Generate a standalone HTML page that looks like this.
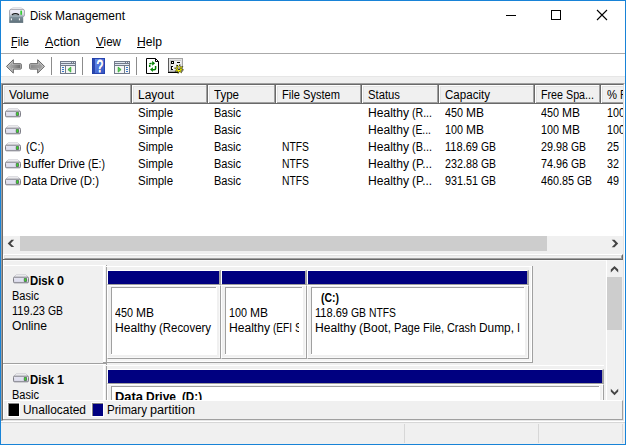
<!DOCTYPE html>
<html><head><meta charset="utf-8"><title>Disk Management</title>
<style>
html,body{margin:0;padding:0;}
body{width:626px;height:445px;position:relative;overflow:hidden;background:#fff;font-family:"Liberation Sans",sans-serif;font-size:12px;color:#000;}
.a{position:absolute;}
.t{position:absolute;white-space:pre;line-height:14px;height:14px;}
.w{position:absolute;top:0;transform-origin:0 0;white-space:pre}
.g{background:#f0f0f0;}
.hs{position:absolute;top:85px;width:1px;height:19px;background:#696969}
.hs::before{content:"";position:absolute;left:-1px;top:0;width:1px;height:18px;background:#a0a0a0}
.hs::after{content:"";position:absolute;left:1px;top:0;width:1px;height:18px;background:#fff}
.hs i{position:absolute;left:2px;top:1px;width:1px;height:16px;background:#e3e3e3}
</style></head><body>
<svg width="0" height="0" style="position:absolute"><defs>
<linearGradient id="dg" x1="0" y1="0" x2="0" y2="1"><stop offset="0" stop-color="#f4f4f8"/><stop offset="1" stop-color="#c6c6d2"/></linearGradient>
<linearGradient id="ag" x1="0" y1="0" x2="1" y2="0"><stop offset="0" stop-color="#b2b2b2"/><stop offset=".55" stop-color="#909090"/><stop offset="1" stop-color="#6c6c6c"/></linearGradient>
<linearGradient id="ag2" x1="0" y1="0" x2="1" y2="0"><stop offset="0" stop-color="#8a8a8a"/><stop offset="1" stop-color="#a4a4a4"/></linearGradient>
<linearGradient id="hg" x1="0" y1="0" x2="1" y2="1"><stop offset="0" stop-color="#6f94f2"/><stop offset="1" stop-color="#3052c0"/></linearGradient>
<linearGradient id="tg" x1="0" y1="0" x2="0" y2="1"><stop offset="0" stop-color="#8698a2"/><stop offset="1" stop-color="#5c6e78"/></linearGradient>
</defs></svg>

<!-- window frame -->
<div class="a" style="left:0;top:0;width:624px;height:443px;border:1px solid #1883d7;"></div>

<!-- title bar -->
<svg class="a" style="left:9px;top:7px" width="16" height="16" viewBox="0 0 16 16">
 <path d="M4 .6H12L15 2.6H1Z" fill="#f4f4f6" stroke="#cfcfd4" stroke-width=".6"/>
 <rect x=".5" y="2.4" width="15" height="7.2" rx="1.6" fill="url(#dg)" stroke="#a2a2ac" stroke-width=".9"/>
 <rect x="2.2" y="3.4" width="8.6" height="3" fill="#eaeaf6"/>
 <rect x="11.4" y="3.6" width="1.5" height="4.2" fill="#22cc22"/>
 <rect x=".2" y="8.7" width="14" height="7.2" fill="url(#tg)"/>
 <rect x=".2" y="8.7" width="14" height=".9" fill="#a9b8c0"/>
 <path d="M2.9 7.8Q6.4 5.2 9.9 7.8V9H2.9Z" fill="#95a3ab"/><path d="M2.9 7.8Q6.4 5.2 9.9 7.8" fill="none" stroke="#1a1a1a" stroke-width="1.15"/>
 <rect x="1.9" y="11.4" width="1" height="1.9" fill="#fff"/><rect x="9.9" y="11.4" width="1" height="1.9" fill="#fff"/>
</svg>
<span class="t" style="left:29.60px;top:9.00px;"><span class="w" style="left:0px;transform:scaleX(0.9424)">Disk</span> <span class="w" style="left:25px;transform:scaleX(0.9993)">Management</span></span>
<svg class="a" style="left:490px;top:1px" width="135" height="30" viewBox="0 0 135 30" shape-rendering="crispEdges">
 <rect x="16" y="14" width="10" height="1" fill="#000"/>
 <rect x="61.5" y="9.5" width="9" height="9" stroke="#000" stroke-width="1" fill="none"/>
 <path d="M107 9l10 10M117 9l-10 10" stroke="#000" stroke-width="1.1" fill="none" shape-rendering="auto"/>
</svg>

<!-- menu -->
<span class="t" style="left:11.00px;top:35.00px;"><span class="w" style="left:0px;transform:scaleX(0.9305)">File</span></span>
<span class="t" style="left:45.00px;top:35.00px;"><span class="w" style="left:0px;transform:scaleX(1.0492)">Action</span></span>
<span class="t" style="left:96.00px;top:35.00px;"><span class="w" style="left:0px;transform:scaleX(0.9691)">View</span></span>
<span class="t" style="left:137.00px;top:35.00px;"><span class="w" style="left:0px;transform:scaleX(1.0127)">Help</span></span>
<div class="a" style="left:11px;top:47px;width:6px;height:1px;background:#000"></div>
<div class="a" style="left:45px;top:47px;width:8px;height:1px;background:#000"></div>
<div class="a" style="left:96px;top:47px;width:8px;height:1px;background:#000"></div>
<div class="a" style="left:137px;top:47px;width:8px;height:1px;background:#000"></div>
<div class="a" style="left:1px;top:53px;width:624px;height:1px;background:#aaa"></div>

<!-- toolbar -->
<svg class="a" style="left:1px;top:54px" width="200" height="23" viewBox="1 54 200 23">
 <path d="M6.5 66.4L13.3 59.7V63.7H20.6Q21.3 63.7 21.3 64.4V68.4Q21.3 69.1 20.6 69.1H13.3V73.1Z" fill="#c2c2c2" stroke="#636363" stroke-width="1" stroke-linejoin="miter"/>
 <path d="M8.3 66.4L12.2 62.5V64.8H20.2V68H12.2V70.3Z" fill="url(#ag)"/>
 <path d="M44.5 66.4L37.7 59.7V63.7H30.4Q29.7 63.7 29.7 64.4V68.4Q29.7 69.1 30.4 69.1H37.7V73.1Z" fill="#c2c2c2" stroke="#636363" stroke-width="1" stroke-linejoin="miter"/>
 <path d="M42.7 66.4L38.8 62.5V64.8H30.8V68H38.8V70.3Z" fill="url(#ag2)"/>
 <g shape-rendering="crispEdges">
 <rect x="51" y="57" width="1" height="18" fill="#8c8c8c"/>
 <rect x="82" y="57" width="1" height="18" fill="#8c8c8c"/>
 <rect x="136" y="57" width="1" height="18" fill="#8c8c8c"/>
 <!-- show/hide tree -->
 <rect x="60.5" y="61.5" width="15" height="12" fill="#f6f6f6" stroke="#727a8a"/>
 <rect x="61" y="62" width="14" height="4" fill="#727a8a"/>
 <rect x="61" y="62" width="10" height="1" fill="#dfe5ef"/><rect x="72" y="62" width="1" height="1" fill="#dfe5ef"/><rect x="74" y="62" width="1" height="1" fill="#dfe5ef"/>
 <rect x="61" y="64" width="14" height="1" fill="#dfe5ef"/>
 <rect x="65" y="66" width="1" height="7" fill="#727a8a"/>
 <rect x="62" y="67" width="2" height="1" fill="#3878cc"/><rect x="62" y="69" width="2" height="1" fill="#3878cc"/><rect x="62" y="71" width="2" height="1" fill="#3878cc"/>
 </g>
 <path d="M70.8 67.1V72.1L67.9 69.6Z" fill="#58cc58" stroke="#22a022" stroke-width=".7"/>
 <!-- help -->
 <rect x="92" y="58" width="13" height="16" fill="url(#hg)"/>
 <rect x="92.5" y="58.5" width="12" height="15" fill="none" stroke="#2743ae" stroke-width="1"/>
 <rect x="92" y="58" width="3" height="16" fill="#2340a6" opacity=".85"/>
 <text transform="translate(100.6 72.2) scale(.72 1)" font-family="Liberation Sans,sans-serif" font-size="15.8" fill="#1b2f86" opacity=".6" stroke="#1b2f86" stroke-width=".6" text-anchor="middle">?</text>
 <text transform="translate(99.9 71.6) scale(.72 1)" font-family="Liberation Sans,sans-serif" font-size="15.8" fill="#fff" stroke="#fff" stroke-width=".9" text-anchor="middle">?</text>
 <g shape-rendering="crispEdges">
 <!-- action pane -->
 <rect x="114.5" y="61.5" width="15" height="12" fill="#f6f6f6" stroke="#727a8a"/>
 <rect x="115" y="62" width="14" height="4" fill="#727a8a"/>
 <rect x="115" y="62" width="10" height="1" fill="#dfe5ef"/><rect x="126" y="62" width="1" height="1" fill="#dfe5ef"/><rect x="128" y="62" width="1" height="1" fill="#dfe5ef"/>
 <rect x="115" y="64" width="14" height="1" fill="#dfe5ef"/>
 <rect x="124" y="66" width="1" height="7" fill="#727a8a"/>
 <rect x="126" y="67" width="2" height="1" fill="#3878cc"/><rect x="126" y="69" width="2" height="1" fill="#3878cc"/><rect x="126" y="71" width="2" height="1" fill="#3878cc"/>
 </g>
 <path d="M118.2 67.1V72.1L121.1 69.6Z" fill="#58cc58" stroke="#22a022" stroke-width=".7"/>
 <!-- refresh -->
 <path d="M146.5 58.5H155.5L158.5 61.5V73.5H146.5Z" fill="#fff" stroke="#000" stroke-width="1"/>
 <path d="M155.5 58.5V61.5H158.5" fill="none" stroke="#000" stroke-width="1"/>
 <path d="M149.7 67V64.6Q149.7 63.4 150.9 63.4H152.6" fill="none" stroke="#008000" stroke-width="1.5" stroke-dasharray="2.2 .5"/>
 <path d="M152.2 60.9L155.1 63.3L152.2 65.7Z" fill="#008000"/>
 <path d="M155.6 66V68.5Q155.6 69.7 154.4 69.7H152.6" fill="none" stroke="#008000" stroke-width="1.5"/>
 <path d="M152.9 67.2L150 69.6L152.9 72Z" fill="#008000"/>
 <!-- properties -->
 <g shape-rendering="crispEdges">
 <rect x="168" y="58" width="15" height="14" fill="#a4a4a4"/>
 <rect x="169" y="59" width="13" height="12" fill="#e4e4e4"/>
 <rect x="170" y="60" width="11" height="11" fill="#c8c8c8"/>
 <rect x="171" y="61" width="10" height="9" fill="#f0f0f0"/>
 <rect x="168" y="58" width="1" height="15" fill="#5a5a5a"/><rect x="168" y="72" width="11" height="1" fill="#000"/>
 <rect x="171" y="61" width="3" height="3" fill="#000"/><rect x="172" y="62" width="1" height="1" fill="#fff"/>
 <rect x="177" y="62" width="3" height="1" fill="#000"/>
 <rect x="171" y="66" width="2" height="4" fill="#000"/><rect x="172" y="67" width="1" height="2" fill="#fff"/>
 <rect x="177" y="65" width="3" height="4" fill="#000"/><rect x="178" y="65" width="1" height="3" fill="#fff"/>
 </g>
 <path d="M179.9 64.4L180.3 67.1L182.9 66.4L181.3 68.6L183.6 69.9L180.9 70.3L181.6 72.9L179.4 71.3L178.1 73.6L177.7 70.9L175.1 71.6L176.7 69.4L174.4 68.1L177.1 67.7L176.4 65.1L178.6 66.7Z" fill="#ffff00" stroke="#1a1a00" stroke-width=".55" stroke-linejoin="round"/>
 <circle cx="179" cy="68.6" r="1.5" fill="#222"/>
 <rect x="178.4" y="66.6" width="1.1" height="2.4" fill="#fff"/>
</svg>
<div class="a g" style="left:1px;top:76px;width:624px;height:7px;box-sizing:border-box;border-top:1px solid #e6e6e6"></div>

<div class="a" style="left:1px;top:77px;width:1px;height:6px;background:#f8f5f3"></div>
<!-- list view -->
<div class="a" style="left:1px;top:83px;width:624px;height:171px;box-sizing:border-box;border-top:1px solid #a0a0a0;border-left:1px solid #a0a0a0;border-right:1px solid #fff;background:#fff"></div>
<div class="a" style="left:2px;top:84px;width:622px;height:170px;box-sizing:border-box;border-top:1px solid #696969;border-left:1px solid #696969;border-right:1px solid #e3e3e3;"></div>
<!-- header -->
<div class="a g" style="left:3px;top:85px;width:620px;height:19px;box-sizing:border-box;border-top:1px solid #fff;border-left:1px solid #fff;border-bottom:1px solid #696969"></div>
<div class="a" style="left:4px;top:102px;width:619px;height:1px;background:#a0a0a0"></div>
<div class="a" style="left:4px;top:86px;width:619px;height:1px;background:#e3e3e3"></div>
<div class="a" style="left:4px;top:86px;width:1px;height:16px;background:#e3e3e3"></div>
<div class="a" style="left:3px;top:103px;width:620px;height:1px;background:#696969"></div>
<div class="hs" style="left:131px"><i></i></div><div class="hs" style="left:207px"><i></i></div><div class="hs" style="left:275px"><i></i></div><div class="hs" style="left:361px"><i></i></div><div class="hs" style="left:438px"><i></i></div><div class="hs" style="left:534px"><i></i></div><div class="hs" style="left:600px"><i></i></div>
<svg class="a" style="left:5px;top:107.5px" width="16" height="10" viewBox="0 0 16 10"><path d="M3.3 .8H12.7L15.4 3.3H.6Z" fill="#f5f5f7" stroke="#bcbcc4" stroke-width=".7"/><rect x=".5" y="3.2" width="15" height="5.6" rx="1.1" fill="url(#dg)" stroke="#70707a" stroke-width=".9"/><rect x="1.8" y="4.2" width="9" height="3.4" fill="#e0e0f0"/><rect x="10.8" y="3.9" width="3.2" height="4" rx=".8" fill="#60606a"/><rect x="11.5" y="4.4" width="1.8" height="3" fill="#3ad828"/></svg>
<svg class="a" style="left:5px;top:124.5px" width="16" height="10" viewBox="0 0 16 10"><path d="M3.3 .8H12.7L15.4 3.3H.6Z" fill="#f5f5f7" stroke="#bcbcc4" stroke-width=".7"/><rect x=".5" y="3.2" width="15" height="5.6" rx="1.1" fill="url(#dg)" stroke="#70707a" stroke-width=".9"/><rect x="1.8" y="4.2" width="9" height="3.4" fill="#e0e0f0"/><rect x="10.8" y="3.9" width="3.2" height="4" rx=".8" fill="#60606a"/><rect x="11.5" y="4.4" width="1.8" height="3" fill="#3ad828"/></svg>
<svg class="a" style="left:5px;top:141.5px" width="16" height="10" viewBox="0 0 16 10"><path d="M3.3 .8H12.7L15.4 3.3H.6Z" fill="#f5f5f7" stroke="#bcbcc4" stroke-width=".7"/><rect x=".5" y="3.2" width="15" height="5.6" rx="1.1" fill="url(#dg)" stroke="#70707a" stroke-width=".9"/><rect x="1.8" y="4.2" width="9" height="3.4" fill="#e0e0f0"/><rect x="10.8" y="3.9" width="3.2" height="4" rx=".8" fill="#60606a"/><rect x="11.5" y="4.4" width="1.8" height="3" fill="#3ad828"/></svg>
<svg class="a" style="left:5px;top:158.5px" width="16" height="10" viewBox="0 0 16 10"><path d="M3.3 .8H12.7L15.4 3.3H.6Z" fill="#f5f5f7" stroke="#bcbcc4" stroke-width=".7"/><rect x=".5" y="3.2" width="15" height="5.6" rx="1.1" fill="url(#dg)" stroke="#70707a" stroke-width=".9"/><rect x="1.8" y="4.2" width="9" height="3.4" fill="#e0e0f0"/><rect x="10.8" y="3.9" width="3.2" height="4" rx=".8" fill="#60606a"/><rect x="11.5" y="4.4" width="1.8" height="3" fill="#3ad828"/></svg>
<svg class="a" style="left:5px;top:175.5px" width="16" height="10" viewBox="0 0 16 10"><path d="M3.3 .8H12.7L15.4 3.3H.6Z" fill="#f5f5f7" stroke="#bcbcc4" stroke-width=".7"/><rect x=".5" y="3.2" width="15" height="5.6" rx="1.1" fill="url(#dg)" stroke="#70707a" stroke-width=".9"/><rect x="1.8" y="4.2" width="9" height="3.4" fill="#e0e0f0"/><rect x="10.8" y="3.9" width="3.2" height="4" rx=".8" fill="#60606a"/><rect x="11.5" y="4.4" width="1.8" height="3" fill="#3ad828"/></svg>
<span class="t" style="left:9.00px;top:88.00px;"><span class="w" style="left:0px;transform:scaleX(0.9992)">Volume</span></span>
<span class="t" style="left:138.00px;top:88.00px;"><span class="w" style="left:0px;transform:scaleX(0.9991)">Layout</span></span>
<span class="t" style="left:214.00px;top:88.00px;"><span class="w" style="left:0px;transform:scaleX(0.9610)">Type</span></span>
<span class="t" style="left:282.00px;top:88.00px;"><span class="w" style="left:0px;transform:scaleX(0.9305)">File</span> <span class="w" style="left:21px;transform:scaleX(0.9246)">System</span></span>
<span class="t" style="left:368.00px;top:88.00px;"><span class="w" style="left:0px;transform:scaleX(0.9403)">Status</span></span>
<span class="t" style="left:445.00px;top:88.00px;"><span class="w" style="left:0px;transform:scaleX(0.9639)">Capacity</span></span>
<span class="t" style="left:541.00px;top:88.00px;"><span class="w" style="left:0px;transform:scaleX(0.8911)">Free</span> <span class="w" style="left:25px;transform:scaleX(0.8929)">Spa...</span></span>
<div class="a" style="left:0;top:88.00px;width:623px;height:15px;overflow:hidden"><span class="t" style="left:607.00px;top:0;"><span class="w" style="left:0px;transform:scaleX(0.9370)">%</span> <span class="w" style="left:13px;transform:scaleX(0.8911)">Free</span></span></div>
<span class="t" style="left:138.00px;top:106.00px;"><span class="w" style="left:0px;transform:scaleX(0.9540)">Simple</span></span>
<span class="t" style="left:214.00px;top:106.00px;"><span class="w" style="left:0px;transform:scaleX(0.9201)">Basic</span></span>
<span class="t" style="left:368.00px;top:106.00px;"><span class="w" style="left:0px;transform:scaleX(1.0077)">Healthy</span> <span class="w" style="left:44px;transform:scaleX(0.8822)">(R...</span></span>
<span class="t" style="left:445.00px;top:106.00px;"><span class="w" style="left:0px;transform:scaleX(0.8986)">450</span> <span class="w" style="left:21px;transform:scaleX(1.0000)">MB</span></span>
<span class="t" style="left:541.00px;top:106.00px;"><span class="w" style="left:0px;transform:scaleX(0.8986)">450</span> <span class="w" style="left:21px;transform:scaleX(1.0000)">MB</span></span>
<div class="a" style="left:0;top:106.00px;width:623px;height:15px;overflow:hidden"><span class="t" style="left:607.00px;top:0;"><span class="w" style="left:0px;transform:scaleX(0.8986)">100</span> <span class="w" style="left:21px;transform:scaleX(0.9370)">%</span></span></div>
<span class="t" style="left:138.00px;top:123.00px;"><span class="w" style="left:0px;transform:scaleX(0.9540)">Simple</span></span>
<span class="t" style="left:214.00px;top:123.00px;"><span class="w" style="left:0px;transform:scaleX(0.9201)">Basic</span></span>
<span class="t" style="left:368.00px;top:123.00px;"><span class="w" style="left:0px;transform:scaleX(1.0077)">Healthy</span> <span class="w" style="left:44px;transform:scaleX(0.8630)">(E...</span></span>
<span class="t" style="left:445.00px;top:123.00px;"><span class="w" style="left:0px;transform:scaleX(0.8986)">100</span> <span class="w" style="left:21px;transform:scaleX(1.0000)">MB</span></span>
<span class="t" style="left:541.00px;top:123.00px;"><span class="w" style="left:0px;transform:scaleX(0.8986)">100</span> <span class="w" style="left:21px;transform:scaleX(1.0000)">MB</span></span>
<div class="a" style="left:0;top:123.00px;width:623px;height:15px;overflow:hidden"><span class="t" style="left:607.00px;top:0;"><span class="w" style="left:0px;transform:scaleX(0.8986)">100</span> <span class="w" style="left:21px;transform:scaleX(0.9370)">%</span></span></div>
<span class="t" style="left:23.00px;top:140.00px;"> <span class="w" style="left:3px;transform:scaleX(0.9000)">(C:)</span></span>
<span class="t" style="left:138.00px;top:140.00px;"><span class="w" style="left:0px;transform:scaleX(0.9540)">Simple</span></span>
<span class="t" style="left:214.00px;top:140.00px;"><span class="w" style="left:0px;transform:scaleX(0.9201)">Basic</span></span>
<span class="t" style="left:282.00px;top:140.00px;"><span class="w" style="left:0px;transform:scaleX(0.8614)">NTFS</span></span>
<span class="t" style="left:368.00px;top:140.00px;"><span class="w" style="left:0px;transform:scaleX(1.0077)">Healthy</span> <span class="w" style="left:44px;transform:scaleX(0.9084)">(B...</span></span>
<span class="t" style="left:445.00px;top:140.00px;"><span class="w" style="left:0px;transform:scaleX(0.9215)">118.69</span> <span class="w" style="left:36px;transform:scaleX(0.8649)">GB</span></span>
<span class="t" style="left:541.00px;top:140.00px;"><span class="w" style="left:0px;transform:scaleX(0.8991)">29.98</span> <span class="w" style="left:30px;transform:scaleX(0.8649)">GB</span></span>
<div class="a" style="left:0;top:140.00px;width:620px;height:15px;overflow:hidden"><span class="t" style="left:607.00px;top:0;"><span class="w" style="left:0px;transform:scaleX(0.8982)">25</span> <span class="w" style="left:15px;transform:scaleX(0.9370)">%</span></span></div>
<span class="t" style="left:23.00px;top:157.00px;"><span class="w" style="left:0px;transform:scaleX(1.0059)">Buffer</span> <span class="w" style="left:35px;transform:scaleX(0.9637)">Drive</span> <span class="w" style="left:65px;transform:scaleX(0.8788)">(E:)</span></span>
<span class="t" style="left:138.00px;top:157.00px;"><span class="w" style="left:0px;transform:scaleX(0.9540)">Simple</span></span>
<span class="t" style="left:214.00px;top:157.00px;"><span class="w" style="left:0px;transform:scaleX(0.9201)">Basic</span></span>
<span class="t" style="left:282.00px;top:157.00px;"><span class="w" style="left:0px;transform:scaleX(0.8614)">NTFS</span></span>
<span class="t" style="left:368.00px;top:157.00px;"><span class="w" style="left:0px;transform:scaleX(1.0077)">Healthy</span> <span class="w" style="left:44px;transform:scaleX(0.9771)">(P...</span></span>
<span class="t" style="left:445.00px;top:157.00px;"><span class="w" style="left:0px;transform:scaleX(0.8991)">232.88</span> <span class="w" style="left:36px;transform:scaleX(0.8649)">GB</span></span>
<span class="t" style="left:541.00px;top:157.00px;"><span class="w" style="left:0px;transform:scaleX(0.8991)">74.96</span> <span class="w" style="left:30px;transform:scaleX(0.8649)">GB</span></span>
<div class="a" style="left:0;top:157.00px;width:620px;height:15px;overflow:hidden"><span class="t" style="left:607.00px;top:0;"><span class="w" style="left:0px;transform:scaleX(0.8982)">32</span> <span class="w" style="left:15px;transform:scaleX(0.9370)">%</span></span></div>
<span class="t" style="left:23.00px;top:174.00px;"><span class="w" style="left:0px;transform:scaleX(0.9464)">Data</span> <span class="w" style="left:27px;transform:scaleX(0.9637)">Drive</span> <span class="w" style="left:57px;transform:scaleX(0.9500)">(D:)</span></span>
<span class="t" style="left:138.00px;top:174.00px;"><span class="w" style="left:0px;transform:scaleX(0.9540)">Simple</span></span>
<span class="t" style="left:214.00px;top:174.00px;"><span class="w" style="left:0px;transform:scaleX(0.9201)">Basic</span></span>
<span class="t" style="left:282.00px;top:174.00px;"><span class="w" style="left:0px;transform:scaleX(0.8614)">NTFS</span></span>
<span class="t" style="left:368.00px;top:174.00px;"><span class="w" style="left:0px;transform:scaleX(1.0077)">Healthy</span> <span class="w" style="left:44px;transform:scaleX(0.9771)">(P...</span></span>
<span class="t" style="left:445.00px;top:174.00px;"><span class="w" style="left:0px;transform:scaleX(0.8991)">931.51</span> <span class="w" style="left:36px;transform:scaleX(0.8649)">GB</span></span>
<span class="t" style="left:541.00px;top:174.00px;"><span class="w" style="left:0px;transform:scaleX(0.8991)">460.85</span> <span class="w" style="left:36px;transform:scaleX(0.8649)">GB</span></span>
<div class="a" style="left:0;top:174.00px;width:620px;height:15px;overflow:hidden"><span class="t" style="left:607.00px;top:0;"><span class="w" style="left:0px;transform:scaleX(0.8982)">49</span> <span class="w" style="left:15px;transform:scaleX(0.9370)">%</span></span></div>
<!-- h scrollbar -->
<div class="a g" style="left:3px;top:236px;width:620px;height:19px"></div>
<div class="a" style="left:20px;top:236px;width:527px;height:15px;background:#cdcdcd"></div>
<svg class="a" style="left:3px;top:236px" width="17" height="17" viewBox="0 0 17 17"><path d="M11.2 3.7H8.4L4.7 7.4L8.4 11.1H11.2L7.6 7.4Z" fill="#444"/></svg>
<svg class="a" style="left:606px;top:236px" width="17" height="17" viewBox="0 0 17 17"><path d="M5.7 3.8H8.5L12.2 7.5L8.5 11.2H5.7L9.3 7.5Z" fill="#444"/></svg>

<!-- splitter + lower pane -->
<div class="a g" style="left:1px;top:254px;width:624px;height:168px;box-sizing:border-box;border-left:1px solid #a0a0a0;border-right:1px solid #fff;border-bottom:1px solid #fff;"></div>
<div class="a" style="left:2px;top:254px;width:622px;height:167px;box-sizing:border-box;border-left:1px solid #696969;border-right:1px solid #e3e3e3;border-bottom:1px solid #fff;"></div>
<div class="a" style="left:3px;top:254px;width:620px;height:6px;box-sizing:border-box;border-top:1px solid #fff;border-left:1px solid #fff;border-right:1px solid #696969;border-bottom:1px solid #696969"></div>
<div class="a" style="left:4px;top:255px;width:618px;height:4px;box-sizing:border-box;border-top:1px solid #e3e3e3;border-left:1px solid #e3e3e3;border-right:1px solid #a0a0a0;border-bottom:1px solid #a0a0a0"></div>
<div class="a" style="left:3px;top:259px;width:620px;height:1px;background:#696969"></div>
<div class="a" style="left:3px;top:260px;width:603px;height:1px;background:#f9f9f9"></div>
<div class="a" style="left:3px;top:260px;width:1px;height:140px;background:#fff"></div>
<!-- disk 0 row -->
<div class="a" style="left:3px;top:265px;width:103px;height:1px;background:#fff"></div>
<div class="a" style="left:103px;top:266px;width:2px;height:96px;background:#fff"></div>
<div class="a" style="left:106px;top:265px;width:1px;height:100px;background:#a0a0a0"></div>
<div class="a" style="left:106px;top:266px;width:426px;height:1px;background:#fff"></div>
<div class="a" style="left:3px;top:363px;width:103px;height:1px;background:#a0a0a0"></div>
<div class="a" style="left:103px;top:362px;width:430px;height:1px;background:#a0a0a0"></div>
<div class="a" style="left:532px;top:266px;width:1px;height:97px;background:#a0a0a0"></div>
<div class="a" style="left:531px;top:267px;width:1px;height:95px;background:#fff"></div>
<div class="a" style="left:107px;top:361px;width:425px;height:1px;background:#fff"></div>
<div class="a" style="left:529px;top:267px;width:2px;height:94px;background:#f5f5f5"></div>
<div class="a" style="left:107px;top:359px;width:424px;height:2px;background:#f5f5f5"></div>
<div class="a" style="left:107px;top:270px;width:114px;height:15px;box-sizing:border-box;background:#000080;border-top:1px solid #fff;border-left:1px solid #fff;border-right:2px solid #a4a4a4;border-bottom:1px solid #a0a0a0"></div>
<div class="a g" style="left:107px;top:285px;width:114px;height:74px;box-sizing:border-box;border-top:1px solid #fff;border-left:1px solid #fff;border-right:1px solid #a0a0a0;border-bottom:1px solid #a0a0a0"></div>
<div class="a" style="left:219px;top:286px;width:1px;height:72px;background:#f9f9f9"></div>
<div class="a" style="left:108px;top:357px;width:112px;height:1px;background:#f9f9f9"></div>
<div class="a" style="left:111px;top:287px;width:106px;height:68px;background:#fff"></div>
<div class="a" style="left:111px;top:287px;width:105px;height:67px;border-top:1px solid #a0a0a0;border-left:1px solid #a0a0a0;box-sizing:border-box"></div>
<div class="a" style="left:221px;top:270px;width:86px;height:15px;box-sizing:border-box;background:#000080;border-top:1px solid #fff;border-left:1px solid #fff;border-right:2px solid #a4a4a4;border-bottom:1px solid #a0a0a0"></div>
<div class="a g" style="left:221px;top:285px;width:86px;height:74px;box-sizing:border-box;border-top:1px solid #fff;border-left:1px solid #fff;border-right:1px solid #a0a0a0;border-bottom:1px solid #a0a0a0"></div>
<div class="a" style="left:305px;top:286px;width:1px;height:72px;background:#f9f9f9"></div>
<div class="a" style="left:222px;top:357px;width:84px;height:1px;background:#f9f9f9"></div>
<div class="a" style="left:225px;top:287px;width:78px;height:68px;background:#fff"></div>
<div class="a" style="left:225px;top:287px;width:77px;height:67px;border-top:1px solid #a0a0a0;border-left:1px solid #a0a0a0;box-sizing:border-box"></div>
<div class="a" style="left:307px;top:270px;width:222px;height:15px;box-sizing:border-box;background:#000080;border-top:1px solid #fff;border-left:1px solid #fff;border-right:2px solid #a4a4a4;border-bottom:1px solid #a0a0a0"></div>
<div class="a g" style="left:307px;top:285px;width:222px;height:74px;box-sizing:border-box;border-top:1px solid #fff;border-left:1px solid #fff;border-right:1px solid #a0a0a0;border-bottom:1px solid #a0a0a0"></div>
<div class="a" style="left:527px;top:286px;width:1px;height:72px;background:#f9f9f9"></div>
<div class="a" style="left:308px;top:357px;width:220px;height:1px;background:#f9f9f9"></div>
<div class="a" style="left:311px;top:287px;width:214px;height:68px;background:#fff"></div>
<div class="a" style="left:311px;top:287px;width:213px;height:67px;border-top:1px solid #a0a0a0;border-left:1px solid #a0a0a0;box-sizing:border-box"></div>
<!-- disk 1 row -->
<div class="a" style="left:3px;top:364px;width:103px;height:1px;background:#fff"></div>
<div class="a" style="left:103px;top:365px;width:2px;height:96px;background:#fff"></div>
<div class="a" style="left:106px;top:364px;width:1px;height:100px;background:#a0a0a0"></div>
<div class="a" style="left:106px;top:365px;width:498px;height:1px;background:#fff"></div>
<div class="a" style="left:107px;top:369px;width:497px;height:15px;box-sizing:border-box;background:#000080;border-top:1px solid #fff;border-left:1px solid #fff;border-right:2px solid #a4a4a4;border-bottom:1px solid #a0a0a0"></div>
<div class="a g" style="left:107px;top:384px;width:497px;height:74px;box-sizing:border-box;border-top:1px solid #fff;border-left:1px solid #fff;border-right:1px solid #a0a0a0;border-bottom:1px solid #a0a0a0"></div>
<div class="a" style="left:602px;top:385px;width:1px;height:72px;background:#f9f9f9"></div>
<div class="a" style="left:108px;top:456px;width:495px;height:1px;background:#f9f9f9"></div>
<div class="a" style="left:111px;top:386px;width:489px;height:68px;background:#fff"></div>
<div class="a" style="left:111px;top:386px;width:488px;height:67px;border-top:1px solid #a0a0a0;border-left:1px solid #a0a0a0;box-sizing:border-box"></div>
<svg class="a" style="left:13px;top:273.5px" width="16" height="10" viewBox="0 0 16 10"><path d="M3.3 .8H12.7L15.4 3.3H.6Z" fill="#f5f5f7" stroke="#bcbcc4" stroke-width=".7"/><rect x=".5" y="3.2" width="15" height="5.6" rx="1.1" fill="url(#dg)" stroke="#70707a" stroke-width=".9"/><rect x="1.8" y="4.2" width="9" height="3.4" fill="#e0e0f0"/><rect x="10.8" y="3.9" width="3.2" height="4" rx=".8" fill="#60606a"/><rect x="11.5" y="4.4" width="1.8" height="3" fill="#3ad828"/></svg>
<svg class="a" style="left:13px;top:372.5px" width="16" height="10" viewBox="0 0 16 10"><path d="M3.3 .8H12.7L15.4 3.3H.6Z" fill="#f5f5f7" stroke="#bcbcc4" stroke-width=".7"/><rect x=".5" y="3.2" width="15" height="5.6" rx="1.1" fill="url(#dg)" stroke="#70707a" stroke-width=".9"/><rect x="1.8" y="4.2" width="9" height="3.4" fill="#e0e0f0"/><rect x="10.8" y="3.9" width="3.2" height="4" rx=".8" fill="#60606a"/><rect x="11.5" y="4.4" width="1.8" height="3" fill="#3ad828"/></svg>
<span class="t" style="left:29.70px;top:273.50px;font-weight:bold;"><span class="w" style="left:0px;transform:scaleX(0.9464)">Disk</span> <span class="w" style="left:27px;transform:scaleX(1.0467)">0</span></span>
<span class="t" style="left:11.80px;top:288.50px;"><span class="w" style="left:0px;transform:scaleX(0.9201)">Basic</span></span>
<span class="t" style="left:11.80px;top:303.50px;"><span class="w" style="left:0px;transform:scaleX(0.9215)">119.23</span> <span class="w" style="left:36px;transform:scaleX(0.8649)">GB</span></span>
<span class="t" style="left:11.80px;top:318.50px;"><span class="w" style="left:0px;transform:scaleX(1.0090)">Online</span></span>
<span class="t" style="left:115.00px;top:305.60px;"><span class="w" style="left:0px;transform:scaleX(0.8986)">450</span> <span class="w" style="left:21px;transform:scaleX(1.0000)">MB</span></span>
<div class="a" style="left:0;top:320.60px;width:214px;height:15px;overflow:hidden"><span class="t" style="left:115.00px;top:0;"><span class="w" style="left:0px;transform:scaleX(1.0077)">Healthy</span> <span class="w" style="left:44px;transform:scaleX(0.9509)">(Recovery</span> <span class="w" style="left:99px;transform:scaleX(1.0202)">Partition)</span></span></div>
<span class="t" style="left:229.00px;top:305.60px;"><span class="w" style="left:0px;transform:scaleX(0.8986)">100</span> <span class="w" style="left:21px;transform:scaleX(1.0000)">MB</span></span>
<div class="a" style="left:0;top:320.60px;width:299px;height:15px;overflow:hidden"><span class="t" style="left:229.00px;top:0;"><span class="w" style="left:0px;transform:scaleX(1.0077)">Healthy</span> <span class="w" style="left:44px;transform:scaleX(0.8380)">(EFI</span> <span class="w" style="left:66px;transform:scaleX(0.9246)">System</span> <span class="w" style="left:106px;transform:scaleX(1.0202)">Partition)</span></span></div>
<span class="t" style="left:315.00px;top:290.60px;font-weight:bold;">  <span class="w" style="left:6px;transform:scaleX(0.8714)">(C:)</span></span>
<span class="t" style="left:315.00px;top:305.60px;"><span class="w" style="left:0px;transform:scaleX(0.9215)">118.69</span> <span class="w" style="left:36px;transform:scaleX(0.8649)">GB</span> <span class="w" style="left:54px;transform:scaleX(0.8614)">NTFS</span></span>
<div class="a" style="left:0;top:320.60px;width:524px;height:15px;overflow:hidden"><span class="t" style="left:315.00px;top:0;"><span class="w" style="left:0px;transform:scaleX(1.0077)">Healthy</span> <span class="w" style="left:44px;transform:scaleX(0.9995)">(Boot,</span> <span class="w" style="left:79px;transform:scaleX(0.9275)">Page</span> <span class="w" style="left:108px;transform:scaleX(0.9263)">File,</span> <span class="w" style="left:132px;transform:scaleX(0.9058)">Crash</span> <span class="w" style="left:164px;transform:scaleX(0.9903)">Dump,</span> <span class="w" style="left:202px;transform:scaleX(0.8972)">I</span></span></div>
<span class="t" style="left:29.70px;top:372.50px;font-weight:bold;"><span class="w" style="left:0px;transform:scaleX(0.9464)">Disk</span> <span class="w" style="left:27px;transform:scaleX(1.0467)">1</span></span>
<span class="t" style="left:11.80px;top:387.50px;"><span class="w" style="left:0px;transform:scaleX(0.9201)">Basic</span></span>
<span class="t" style="left:115.00px;top:389.60px;font-weight:bold;"><span class="w" style="left:0px;transform:scaleX(1.0763)">Data</span> <span class="w" style="left:31px;transform:scaleX(0.9990)">Drive</span>  <span class="w" style="left:67px;transform:scaleX(0.9682)">(D:)</span></span>
<!-- v scrollbar -->
<div class="a g" style="left:606px;top:260px;width:17px;height:140px;box-sizing:border-box;border-left:1px solid #fff"></div>
<div class="a" style="left:607px;top:277px;width:15px;height:53px;background:#cdcdcd"></div>
<svg class="a" style="left:606px;top:260px" width="17" height="17" viewBox="0 0 17 17"><path d="M4.8 12.4V9.6L8.5 5.9L12.2 9.6V12.4L8.5 8.8Z" fill="#444"/></svg>
<svg class="a" style="left:606px;top:383px" width="17" height="17" viewBox="0 0 17 17"><path d="M4.8 5.8V8.6L8.5 12.3L12.2 8.6V5.8L8.5 9.4Z" fill="#444"/></svg>
<!-- legend -->
<div class="a g" style="left:3px;top:400px;width:620px;height:20px;box-sizing:border-box;border-top:1px solid #fff;border-left:1px solid #fff;border-right:1px solid #a0a0a0;border-bottom:1px solid #a0a0a0"></div>
<div class="a" style="left:7px;top:402px;width:13px;height:15px;box-sizing:border-box;border:1px solid #fff;"><div style="width:11px;height:13px;box-sizing:border-box;border-top:1px solid #868686;border-left:1px solid #868686;background:#000"></div></div>
<div class="a" style="left:91px;top:402px;width:13px;height:15px;box-sizing:border-box;border:1px solid #fff;"><div style="width:11px;height:13px;box-sizing:border-box;border-top:1px solid #868686;border-left:1px solid #868686;background:#000080"></div></div>
<span class="t" style="left:23.40px;top:402.50px;"><span class="w" style="left:0px;transform:scaleX(0.9941)">Unallocated</span></span>
<span class="t" style="left:107.40px;top:402.50px;"><span class="w" style="left:0px;transform:scaleX(0.9675)">Primary</span> <span class="w" style="left:43px;transform:scaleX(1.0538)">partition</span></span>
<!-- status bar -->
<div class="a" style="left:3px;top:419px;width:620px;height:1px;background:#a0a0a0"></div>
<div class="a" style="left:3px;top:420px;width:621px;height:1px;background:#e6e6e6"></div>
<div class="a" style="left:1px;top:421px;width:624px;height:1px;background:#fff"></div>
<div class="a g" style="left:1px;top:422px;width:624px;height:22px;box-sizing:border-box;border-top:1px solid #d7d7d7"></div>
<div class="a" style="left:404px;top:424px;width:1px;height:19px;background:#d7d7d7"></div>
<div class="a" style="left:538px;top:424px;width:1px;height:19px;background:#d7d7d7"></div>
<div class="a" style="left:622px;top:424px;width:1px;height:19px;background:#d7d7d7"></div>
<!-- frame on top -->
<div class="a" style="left:0;top:0;width:1px;height:445px;background:#1883d7"></div>
<div class="a" style="left:625px;top:0;width:1px;height:445px;background:#1883d7"></div>
<div class="a" style="left:0;top:444px;width:626px;height:1px;background:#1883d7"></div>
</body></html>
